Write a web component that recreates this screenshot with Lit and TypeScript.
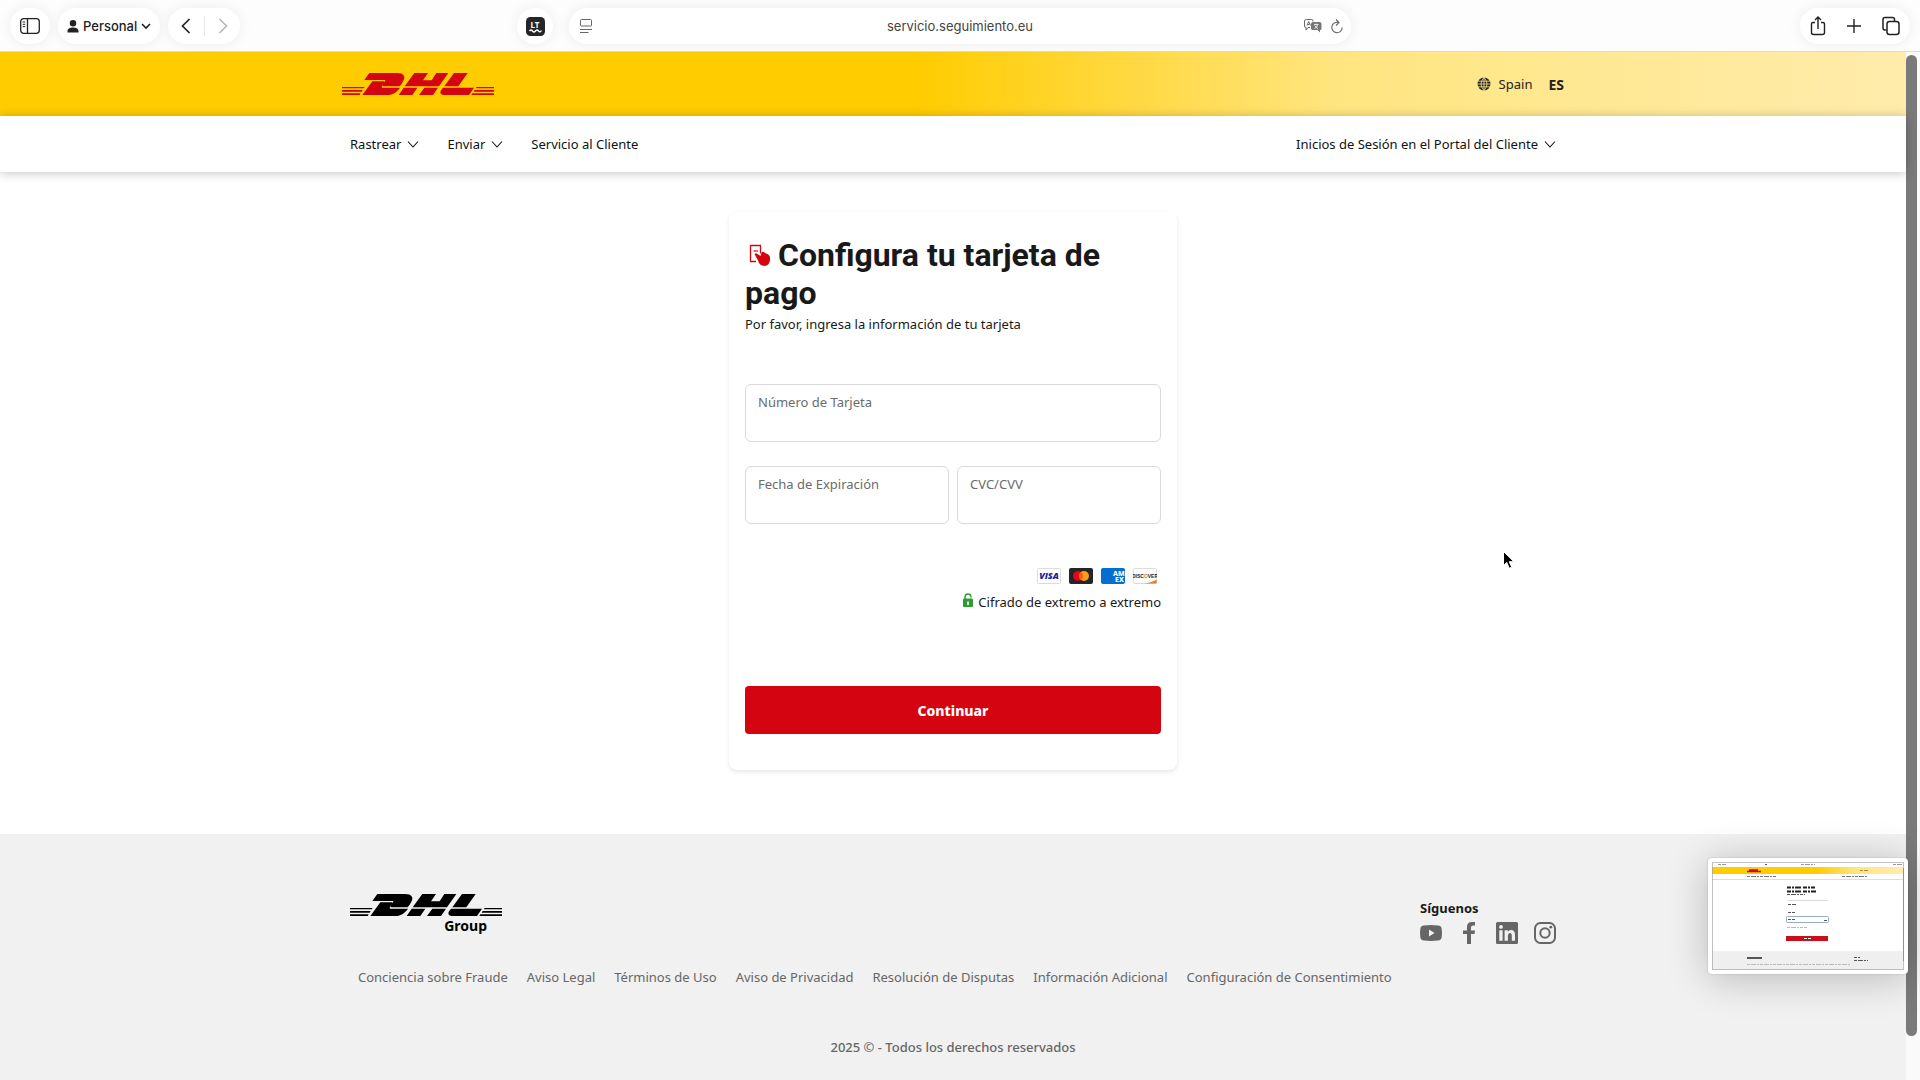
import { LitElement, html, css, svg } from "lit";
import { customElement, property } from "lit/decorators.js";

const MENU = [
  { label: "Rastrear", chevron: true },
  { label: "Enviar", chevron: true },
  { label: "Servicio al Cliente", chevron: false },
];

const LEGAL = [
  "Conciencia sobre Fraude",
  "Aviso Legal",
  "Términos de Uso",
  "Aviso de Privacidad",
  "Resolución de Disputas",
  "Información Adicional",
  "Configuración de Consentimiento",
];

const chevron = html`<svg width="12" height="12" viewBox="0 0 12 12" aria-hidden="true">
  <path d="M1 3.500 6 9l5-5.500" fill="none" stroke="currentColor" stroke-width="1.1" />
</svg>`;

@customElement("brand-logo")
export class BrandLogo extends LitElement {
  static styles = css`
    :host {
      display: block;
      width: 152px;
    }
    .mark {
      display: block;
      width: 100%;
      fill: currentColor;
    }
  `;

  render() {
    return html`<svg class="mark" viewBox="0 0 456 66" role="img" aria-label="DHL">
      <path d="M0 42h68l-3 4H0zM0 51h62l-3 5H0zM0 61h56l-3 5H0z" />
      <path d="M404 42h52v4h-55zM398 51h58v5h-61zM391 61h65v5h-68z" />
      <path d="M82 0h84c18 0 26 10 18 23-4 7-7 13-12 17h-46c-6 0-6-3-4-6l7-9c2-3 1-4-3-4H67z" />
      <path d="M91 25h33c4 0 4 2 3 4l-7 9c-2 4-1 6 4 6h50c-8 12-21 22-38 22H61z" />
      <path d="M217 0h41l-15 22h26l14-22h36l-28 40H188z" />
      <path d="M185 44h41l-15 22h-41zM247 44h41l-15 22h-42z" />
      <path d="M336 0h41l-28 40h-42z" />
      <path d="M303 44h93l-15 22h-76c-9 0-12-7-8-14z" />
    </svg>`;
  }
}

@customElement("browser-bar")
export class BrowserBar extends LitElement {
  static styles = css`
    :host {
      display: block;
      font-family: Inter, "Liberation Sans", sans-serif;
      font-size: 13px;
      color: #222;
    }
    .bar {
      display: grid;
      grid-template-columns: 1fr minmax(0, 782px) 1fr;
      gap: 16px;
      align-items: center;
      padding: 8px 10px 7px;
      background: #fdfdfd;
      border-bottom: 1px solid #dcdcdc;
    }
    .side {
      display: flex;
      align-items: center;
      gap: 8px;
    }
    .end {
      justify-content: flex-end;
    }
    .pill {
      display: flex;
      align-items: center;
      justify-content: center;
      height: 36px;
      box-sizing: border-box;
      border-radius: 18px;
      background: #fff;
      box-shadow: 0 0 14px rgba(0, 0, 0, 0.07);
    }
    button {
      display: flex;
      align-items: center;
      justify-content: center;
      padding: 0;
      border: 0;
      background: none;
      color: inherit;
      font: inherit;
    }
    svg {
      display: block;
      fill: none;
      stroke: currentColor;
    }
    .panel {
      width: 40px;
    }
    .profile {
      gap: 5px;
      padding: 0 9px;
      font-weight: 500;
    }
    .profile button {
      gap: 4px;
    }
    .history {
      width: 72px;
    }
    .history button {
      flex: 1;
    }
    .split {
      width: 1px;
      height: 20px;
      background: #e8e8e8;
    }
    .off {
      color: #b5b5b5;
    }
    .tool {
      width: 36px;
      margin-left: auto;
    }
    .address {
      padding: 0 7px 0 11px;
      gap: 8px;
      color: #666;
    }
    .address input {
      flex: 1;
      min-width: 0;
      border: 0;
      padding: 0 0 0 24px;
      background: none;
      text-align: center;
      font: inherit;
      color: #444;
    }
    .actions {
      gap: 18px;
      padding: 0 9px;
    }
    .badge {
      font: 700 8px "Noto Sans", sans-serif;
      fill: #fff;
      stroke: none;
    }
  `;

  render() {
    return html`<div class="bar">
      <div class="side">
        <div class="pill panel">
          <button aria-label="Barra lateral">
            <svg width="20" height="16" viewBox="0 0 20 16" stroke-width="1.3">
              <rect x="0.700" y="0.700" width="18.600" height="14.600" rx="3" />
              <path d="M7.500 1v14" />
              <path d="M2.700 4h2.500M2.700 6.300h2.500M2.700 8.600h2.500" stroke-width="1" />
            </svg>
          </button>
        </div>
        <div class="pill profile">
          <button>
            <svg width="12" height="13" viewBox="0 0 12 13">
              <path fill="#222" stroke="none" d="M6 0a3 3 0 0 1 0 6.500A3 3 0 0 1 6 0zM.5 12.500V11c0-2 2-3.500 5.500-3.500s5.500 1.500 5.500 3.500v1.500z" />
            </svg>
            <span>Personal</span>
            <svg width="10" height="8" viewBox="0 0 10 8" stroke-width="1.600"><path d="m1 2 4 4 4-4" /></svg>
          </button>
        </div>
        <div class="pill history">
          <button aria-label="Atrás">
            <svg width="10" height="16" viewBox="0 0 10 16" stroke-width="1.700"><path d="M8.500 1 1.500 8l7 7" /></svg>
          </button>
          <span class="split"></span>
          <button class="off" aria-label="Adelante">
            <svg width="10" height="16" viewBox="0 0 10 16" stroke-width="1.500"><path d="m1.500 1 7 7-7 7" /></svg>
          </button>
        </div>
        <div class="pill tool">
          <button aria-label="LanguageTool">
            <svg width="19" height="19" viewBox="0 0 19 19">
              <rect width="19" height="19" rx="4.500" fill="#262626" stroke="none" />
              <text class="badge" x="4.500" y="11">LT</text>
              <path stroke="#fff" stroke-width="1.300" d="M3.500 14q1.500-2 3 0t3 0 3 0 3-.5" />
            </svg>
          </button>
        </div>
      </div>
      <div class="pill address">
        <svg width="12" height="15" viewBox="0 0 12 15" stroke-width="1">
          <rect x="0.500" y="0.500" width="11" height="6.500" rx="1" />
          <path d="M0 10.500h12M0 13.500h8.500" />
        </svg>
        <input aria-label="Dirección" .value=${"servicio.seguimiento.eu"} />
        <svg width="18" height="14" viewBox="0 0 18 14" stroke-width="1">
          <path d="M9 2.500V2Q9 .5 7.500 .5h-5Q.5.500.5 2v5q0 1.500 1.500 1.500v2.500l2-2.500h2M3 6.500l1.700-4L6.500 6.500M3.500 5.500h2" />
          <path fill="#777" stroke="none" d="M9 3h6.500Q17.500 3 17.500 5v4.500q0 1.500-1.500 1.500v2.500L13.500 11H9q-2 0-2-1.500V5q0-2 2-2z" />
          <path stroke="#fff" d="M10 5.500h4.500M12.200 4.500v1M10.500 9.500q3-1 3-4M10.800 6.500q1 2.500 3.200 3" stroke-width=".8" />
        </svg>
        <svg width="14" height="15" viewBox="0 0 14 15" stroke-width="1.100">
          <path d="M8.500 3.500A5.200 5.200 0 1 0 12.200 8.500M6 .5l3 3-3 3" />
        </svg>
      </div>
      <div class="side end">
        <div class="pill actions">
          <button aria-label="Compartir">
            <svg width="18" height="20" viewBox="0 0 18 20" stroke-width="1.400">
              <path d="M6 6.500H4q-1.500 0-1.500 1.500v8.500Q2.500 18.500 4.500 18.500h9q2 0 2-2V8q0-1.500-1.500-1.500h-2M9 13V1.500M6 4l3-3 3 3" />
            </svg>
          </button>
          <button aria-label="Nueva pestaña">
            <svg width="18" height="18" viewBox="0 0 18 18" stroke-width="1.400"><path d="M9 2v14M2 9h14" /></svg>
          </button>
          <button aria-label="Pestañas">
            <svg width="20" height="20" viewBox="0 0 20 20" stroke-width="1.500">
              <rect x="6" y="5.500" width="12" height="13" rx="2.500" />
              <path d="M5.500 14H4q-2 0-2-2V3.500Q2 1.500 4 1.500h7.500q2 0 2 2v1.500" />
            </svg>
          </button>
        </div>
      </div>
    </div>`;
  }
}

@customElement("site-header")
export class SiteHeader extends LitElement {
  static styles = css`
    :host {
      display: block;
      font-size: 13px;
    }
    a {
      color: inherit;
      text-decoration: none;
    }
    .brand {
      background: linear-gradient(90deg, #fc0 0, #fc0 48%, #ffe57f 70%, #ffecac 100%);
    }
    .inner {
      display: flex;
      align-items: center;
      justify-content: space-between;
      max-width: 1206px;
      margin: 0 auto;
      height: 56px;
    }
    .top {
      max-width: 1222px;
      height: 64px;
    }
    .logo {
      color: #d40511;
    }
    .locale {
      display: flex;
      align-items: center;
      gap: 16px;
      color: #222;
    }
    .locale b {
      font-size: 14px;
    }
    .country {
      display: flex;
      align-items: center;
      gap: 8px;
    }
    .nav {
      position: relative;
      background: #fff;
      box-shadow: 0 1px 10px rgba(0, 0, 0, 0.24);
    }
    .menu {
      display: flex;
      gap: 28px;
    }
    .link {
      display: flex;
      align-items: center;
      gap: 6px;
    }
  `;

  render() {
    return html`<header>
      <div class="brand">
        <div class="inner top">
          <a class="logo" href="#"><brand-logo></brand-logo></a>
          <div class="locale">
            <span class="country">
              <svg width="14" height="14" viewBox="0 0 14 14" aria-hidden="true">
                <circle cx="7" cy="7" r="6.500" fill="#222" />
                <path d="M0 4.200h14M0 7h14M0 9.800h14M7 0v14M7 .5Q1 7 7 13.500Q13 7 7 .5" fill="none" stroke="#ffe88f" stroke-width=".8" />
              </svg>
              Spain
            </span>
            <b>ES</b>
          </div>
        </div>
      </div>
      <nav class="nav">
        <div class="inner">
          <div class="menu">
            ${MENU.map((m) => html`<a class="link" href="#">${m.label}${m.chevron ? chevron : ""}</a>`)}
          </div>
          <a class="link" href="#">Inicios de Sesión en el Portal del Cliente${chevron}</a>
        </div>
      </nav>
    </header>`;
  }
}

@customElement("text-field")
export class TextField extends LitElement {
  @property() label = "";

  static styles = css`
    :host {
      display: block;
      min-width: 0;
    }
    .box {
      display: flex;
      flex-direction: column;
      height: 58px;
      box-sizing: border-box;
      padding: 7px 12px;
      border: 1px solid #d9d9d9;
      border-radius: 6px;
      background: #fff;
    }
    label {
      font-size: 13px;
      line-height: 20px;
      color: #6b6b6b;
    }
    input {
      flex: 1;
      min-width: 0;
      min-height: 0;
      padding: 0;
      border: 0;
      outline: 0;
      background: none;
      font: inherit;
    }
  `;

  render() {
    return html`<div class="box">
      <label for="control">${this.label}</label>
      <input id="control" type="text" autocomplete="off" />
    </div>`;
  }
}

@customElement("payment-card")
export class PaymentCard extends LitElement {
  static styles = css`
    :host {
      display: block;
    }
    .card {
      box-sizing: border-box;
      max-width: 448px;
      margin: 0 auto;
      padding: 24px 16px 36px;
      border-radius: 8px;
      background: #fff;
      box-shadow: 0 2px 4px rgba(0, 0, 0, 0.1);
      color: #191919;
    }
    h1 {
      margin: 0;
      font: 700 32px/38px Roboto, "Liberation Sans", sans-serif;
    }
    .lead {
      margin: 0 0 48px;
      font-size: 13px;
      line-height: 24px;
    }
    .fields {
      display: grid;
      grid-template-columns: 1fr 1fr;
      gap: 24px 8px;
    }
    .wide {
      grid-column: 1 / -1;
    }
    .brands {
      display: flex;
      justify-content: flex-end;
      gap: 8px;
      margin: 44px 4px 8px;
    }
    .brands svg {
      display: block;
    }
    .secure {
      display: flex;
      justify-content: flex-end;
      align-items: center;
      gap: 4px;
      margin: 0 0 74px;
      font-size: 13px;
      line-height: 20px;
    }
    .lock {
      margin-bottom: 4px;
    }
    .go {
      display: block;
      width: 100%;
      height: 48px;
      border: 0;
      border-radius: 4px;
      background: #d40511;
      color: #fff;
      font: 800 14px "Noto Sans", sans-serif;
    }
    .visa {
      font: italic 800 9px "Open Sans", sans-serif;
      fill: #1a1f9c;
    }
    .amex {
      font: 800 7px "Noto Sans", sans-serif;
      fill: #fff;
    }
    .disc {
      font: 800 5px "Liberation Sans", sans-serif;
      fill: #222;
    }
  `;

  render() {
    return html`<section class="card">
      <h1>
        <svg width="25" height="24" viewBox="0 0 25 24" aria-hidden="true">
          <path d="M11 19.500H5.500V3.500h10v8" fill="none" stroke="#d40511" stroke-width="1.300" />
          <path d="M8.500 9h4.500" stroke="#d40511" stroke-width="1.200" />
          <path d="M9.500 12q1.500-1.500 3 0l3 2 1-3.500q2-1.500 3.500.5l2.500 1q3.500 2 2.500 6.500-1 5-5.500 5.500-5 0-6.500-5.500z" fill="#d40511" />
        </svg>
        Configura tu tarjeta de pago
      </h1>
      <p class="lead">Por favor, ingresa la información de tu tarjeta</p>
      <div class="fields">
        <text-field class="wide" label="Número de Tarjeta"></text-field>
        <text-field label="Fecha de Expiración"></text-field>
        <text-field label="CVC/CVV"></text-field>
      </div>
      <div class="brands">
        <svg width="24" height="16" viewBox="0 0 24 16">
          <rect x=".5" y=".5" width="23" height="15" rx="1" fill="#fff" stroke="#dcdcdc" />
          <text class="visa" x="12" y="11" text-anchor="middle">VISA</text>
        </svg>
        <svg width="24" height="16" viewBox="0 0 24 16" role="img" aria-label="Mastercard">
          <rect width="24" height="16" rx="2" fill="#252525" />
          <circle cx="9" cy="8" r="5" fill="#eb001b" />
          <circle cx="15" cy="8" r="5" fill="#f79e1b" />
          <path d="M12 4a5 5 0 0 1 0 8 5 5 0 0 1 0-8z" fill="#ff5f00" />
        </svg>
        <svg width="24" height="16" viewBox="0 0 24 16">
          <rect width="24" height="16" rx="2" fill="#016fd0" />
          <text class="amex" x="12" y="8">AM</text>
          <text class="amex" x="14" y="14">EX</text>
        </svg>
        <svg width="24" height="16" viewBox="0 0 24 16">
          <rect x=".5" y=".5" width="23" height="15" rx="1" fill="#fff" stroke="#dcdcdc" />
          <path d="M11 15.500Q19 14.500 23.500 11.500v4z" fill="#e6772b" />
          <text class="disc" x="12" y="9.500" text-anchor="middle">DISC<tspan fill="#e6772b">O</tspan>VER</text>
        </svg>
      </div>
      <p class="secure">
        <svg class="lock" width="12" height="14" viewBox="0 0 12 14" aria-hidden="true">
          <path d="M3 6V4.500Q3 1 6 1t3 3.500" fill="none" stroke="#2e9b35" stroke-width="1.500" />
          <rect x="1" y="5.500" width="10" height="8.500" rx="1" fill="#2e9b35" />
          <path d="M5 8.500h2V12H5z" fill="#d8f2d9" />
        </svg>
        Cifrado de extremo a extremo
      </p>
      <button class="go" type="button">Continuar</button>
    </section>`;
  }
}

@customElement("site-footer")
export class SiteFooter extends LitElement {
  static styles = css`
    :host {
      display: block;
      background: #f1f1f1;
      font-size: 13px;
      line-height: 20px;
      color: #666;
    }
    a {
      color: inherit;
      text-decoration: none;
    }
    .inner {
      max-width: 1206px;
      margin: 0 auto;
      padding: 60px 0 0;
    }
    .top {
      display: flex;
      justify-content: space-between;
      align-items: flex-start;
    }
    .group {
      display: block;
      width: 152px;
      color: #000;
    }
    .name {
      display: block;
      padding-right: 15px;
      text-align: right;
      font: 700 14px/20px "Noto Sans", sans-serif;
    }
    .social {
      padding-top: 4px;
    }
    .follow {
      margin: 0 0 4px;
      font-size: 13px;
      line-height: 20px;
      font-weight: 700;
      color: #191919;
    }
    .icons {
      display: flex;
      gap: 16px;
    }
    .icons svg {
      display: block;
      fill: #666;
    }
    .legal {
      display: flex;
      flex-wrap: wrap;
      gap: 19px;
      padding: 23px 8px 0;
    }
    .rights {
      margin: 50px 0 0;
      padding-bottom: 22px;
      text-align: center;
      font-weight: 500;
    }
  `;

  render() {
    return html`<footer class="inner">
      <div class="top">
        <a class="group" href="#"><brand-logo></brand-logo><span class="name">Group</span></a>
        <div class="social">
          <p class="follow">Síguenos</p>
          <div class="icons">
            <a href="#" aria-label="YouTube">
              <svg width="22" height="22" viewBox="0 0 22 22">
                <path fill-rule="evenodd" d="M4 3.500q7-.8 14 0 3.500.3 3.700 3.500.5 4 0 8-.3 3.200-3.700 3.500-7 .8-14 0Q.600 18.200.300 15q-.5-4 0-8Q.600 3.800 4 3.500zM9 7.500v7l5.500-3.500z" />
              </svg>
            </a>
            <a href="#" aria-label="Facebook">
              <svg width="22" height="22" viewBox="0 0 22 22">
                <path d="M9 22V12H5V8.500h4V5q0-5 5-5h3v3.500h-2q-2 0-2 2v3h4l-.5 3.500H13v10z" />
              </svg>
            </a>
            <a href="#" aria-label="LinkedIn">
              <svg width="22" height="22" viewBox="0 0 22 22">
                <path fill-rule="evenodd" d="M1.500 0h19Q22 0 22 1.500v19q0 1.500-1.500 1.500h-19Q0 22 0 20.500v-19Q0 0 1.500 0zM3.300 8.300v10.400h3.300V8.300zM5 3a1.900 1.900 0 1 0 0 3.800A1.900 1.900 0 1 0 5 3zM8.600 8.300v10.400h3.300v-5q0-2.700 2-2.700t1.900 2.700v5h3.200V13q0-5-4-5-2.200 0-3.200 1.700V8.300z" />
              </svg>
            </a>
            <a href="#" aria-label="Instagram">
              <svg width="22" height="22" viewBox="0 0 22 22">
                <rect x="1" y="1" width="20" height="20" rx="5.500" fill="none" stroke="#666" stroke-width="2" />
                <circle cx="11" cy="11" r="4.700" fill="none" stroke="#666" stroke-width="2" />
                <circle cx="16.800" cy="5.200" r="1.400" />
              </svg>
            </a>
          </div>
        </div>
      </div>
      <nav class="legal">${LEGAL.map((t) => html`<a href="#">${t}</a>`)}</nav>
      <p class="rights">2025 © - Todos los derechos reservados</p>
    </footer>`;
  }
}

const dash = (x: number, y: number, w: number, color = "#555") =>
  svg`<path d="M${x} ${y}h${w}" stroke=${color} stroke-width="1" stroke-dasharray="3 1 5 1 2 1" />`;

@customElement("app-root")
export class AppRoot extends LitElement {
  static styles = css`
    :host {
      display: flex;
      flex-direction: column;
      position: relative;
      min-height: 100vh;
      background: #fff;
      font-family: "Noto Sans", "Open Sans", sans-serif;
      color: #111;
      overflow: hidden;
    }
    .view {
      flex: 1;
      display: grid;
      grid-template-columns: minmax(0, 1fr) 14px;
    }
    .page {
      display: flex;
      flex-direction: column;
    }
    .main {
      padding: 40px 16px 64px;
    }
    .foot {
      flex: 1;
    }
    .track {
      display: flex;
      padding: 3px 3px 44px 0;
      background: #fafafa;
    }
    .thumb {
      flex: 1;
      border-radius: 6px;
      background: #7a7a7a;
    }
    .shot {
      position: absolute;
      right: 12px;
      bottom: 106px;
      padding: 4px;
      border-radius: 4px;
      background: #fff;
      box-shadow: 0 4px 40px rgba(0, 0, 0, 0.24), 0 0 2px rgba(0, 0, 0, 0.2);
    }
    .shot svg {
      display: block;
    }
    .cursor {
      position: absolute;
      left: 1502px;
      top: 550px;
    }
  `;

  render() {
    return html`
      <browser-bar></browser-bar>
      <div class="view">
        <div class="page">
          <site-header></site-header>
          <main class="main"><payment-card></payment-card></main>
          <site-footer class="foot"></site-footer>
        </div>
        <div class="track"><div class="thumb"></div></div>
      </div>
      <div class="shot">
        <svg width="192" height="108" viewBox="0 0 192 108" aria-hidden="true">
          <defs>
            <linearGradient id="sun">
              <stop offset=".55" stop-color="#fc0" />
              <stop offset=".75" stop-color="#ffe57f" />
              <stop offset="1" stop-color="#ffecac" />
            </linearGradient>
          </defs>
          <rect width="192" height="108" fill="#fff" />
          <rect y="5" width="191" height="7" fill="url(#sun)" />
          <path d="M0 17.500h191" stroke="#ddd" />
          ${dash(6, 2.5, 8, "#999")}${dash(53, 2.5, 2)}${dash(89, 2.5, 14, "#999")}${dash(181, 2.5, 9, "#999")}
          <path d="M35 9.500h14M37 8h9" stroke="#d40511" stroke-width="1.500" />
          ${dash(35, 14.5, 29, "#777")}${dash(130, 14.5, 25, "#777")}${dash(148, 8.5, 8, "#a98b30")}
          <path d="M75 25.500h28M75 29.500h29" stroke="#222" stroke-width="2" stroke-dasharray="4 1 2 1 6 2" />
          ${dash(75, 32.5, 18)}
          <path d="M75 38.500h41" stroke="#ddd" />
          ${dash(76, 42.5, 8)}${dash(76, 50.5, 7)}
          <rect x="74.500" y="54.500" width="42" height="6" rx="1" fill="#fff" stroke="#9aabc4" />
          ${dash(76, 57.5, 7)}${dash(112, 58.5, 3)}${dash(75, 65.5, 20, "#bbb")}
          <rect x="74" y="74" width="42" height="5" fill="#c8101c" />
          ${dash(92, 76.5, 7, "#fff")}
          <rect y="89" width="191" height="19" fill="#efefef" />
          <path d="M35 96h15" stroke="#222" stroke-width="1.500" />
          ${dash(142, 95.5, 6)}${dash(142, 98.5, 14)}${dash(35, 102.5, 104, "#bbb")}
          <path d="M191.500 6v93" stroke="#888" />
          <rect x=".5" y=".5" width="191" height="107" fill="none" stroke="#999" stroke-opacity=".6" />
        </svg>
      </div>
      <svg class="cursor" width="14" height="21" viewBox="0 0 14 21" aria-hidden="true">
        <path d="M1.500 1.500v14l3.300-3 2.400 5.700 2.500-1-2.400-5.500h4.500z" fill="#000" stroke="#fff" stroke-width="1" />
      </svg>
    `;
  }
}
